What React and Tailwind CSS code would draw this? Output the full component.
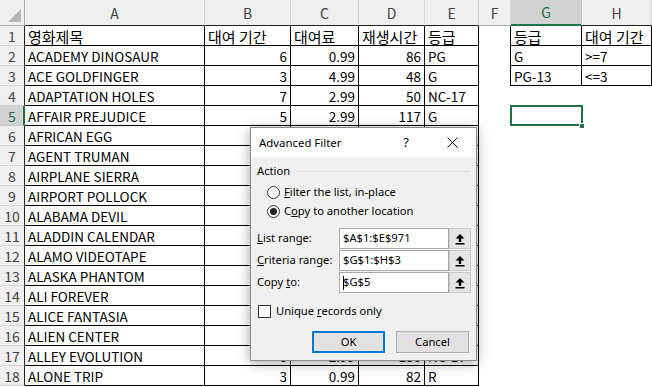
const ROWS = [
  ["영화제목", "대여 기간", "대여료", "재생시간", "등급"],
  ["ACADEMY DINOSAUR", "6", "0.99", "86", "PG"],
  ["ACE GOLDFINGER", "3", "4.99", "48", "G"],
  ["ADAPTATION HOLES", "7", "2.99", "50", "NC-17"],
  ["AFFAIR PREJUDICE", "5", "2.99", "117", "G"],
  ["AFRICAN EGG", "6", "2.99", "130", "G"],
  ["AGENT TRUMAN", "3", "2.99", "169", "PG"],
  ["AIRPLANE SIERRA", "6", "4.99", "62", "PG-13"],
  ["AIRPORT POLLOCK", "6", "4.99", "54", "R"],
  ["ALABAMA DEVIL", "3", "2.99", "114", "PG-13"],
  ["ALADDIN CALENDAR", "6", "4.99", "63", "NC-17"],
  ["ALAMO VIDEOTAPE", "6", "0.99", "126", "G"],
  ["ALASKA PHANTOM", "6", "0.99", "136", "PG"],
  ["ALI FOREVER", "4", "4.99", "150", "PG"],
  ["ALICE FANTASIA", "6", "0.99", "94", "NC-17"],
  ["ALIEN CENTER", "5", "2.99", "46", "NC-17"],
  ["ALLEY EVOLUTION", "6", "2.99", "180", "NC-17"],
  ["ALONE TRIP", "3", "0.99", "82", "R"],
];

const CRITERIA = [
  ["등급", "대여 기간"],
  ["G", ">=7"],
  ["PG-13", "<=3"],
];

const LETTERS = ["A", "B", "C", "D", "E", "F", "G", "H"];

const isKorean = (s) => /[가-힣]/.test(s);

function UpIcon() {
  return (
    <svg width="10" height="12" viewBox="0 0 10 12">
      <path d="M5 1 L9.5 5.5 L6.2 5.5 L6.2 9 L3.8 9 L3.8 5.5 L0.5 5.5 Z" fill="#000" />
      <rect x="0.5" y="10" width="9" height="1.5" fill="#000" />
    </svg>
  );
}

function RefField({ label, value, caret }) {
  return (
    <div className="flex items-center h-[21px]">
      <div className="w-[82px]">{label}</div>
      <div className="flex h-[21px]">
        <div className="w-[110px] bg-white border border-[#a9a9a9] flex items-center pl-[3px]">
          {caret && <span className="w-px h-[14px] bg-black -mr-px" />}
          {value}
        </div>
        <div className="w-[22px] bg-[#e5e5e5] border border-[#c9c9c9] flex items-center justify-center">
          <UpIcon />
        </div>
      </div>
    </div>
  );
}

function Dialog() {
  return (
    <div className="absolute left-[250px] top-[127px] w-[227px] h-[234px] bg-[#f0f0f0] border border-[#8a8a8a] shadow-[0_2px_12px_rgba(0,0,0,0.35)] font-['Segoe_UI','Noto_Sans',sans-serif] text-[11.2px] text-black flex flex-col">
      <div className="h-[29px] bg-white flex items-center pl-[8px] shrink-0">
        <span className="flex-1 text-[11.4px]">Advanced Filter</span>
        <span className="w-[10px] text-center mr-[36px] text-[13px]">?</span>
        <svg width="11" height="11" viewBox="0 0 11 11" className="mr-[18px]">
          <path d="M0.5 0.5 L10.5 10.5 M10.5 0.5 L0.5 10.5" stroke="#000" strokeWidth="1" />
        </svg>
      </div>
      <div className="flex flex-col pl-[6px] pr-[5px]">
        <div className="mt-[6px] h-[16px] flex items-center">
          <span>Action</span>
          <div className="flex-1 h-px bg-[#dcdcdc] ml-[6px] mr-[1px]" />
        </div>
        <div className="mt-[4px] h-[19px] flex items-center pl-[10px]">
          <span className="w-[13px] h-[13px] rounded-full border border-[#333] bg-white" />
          <span className="ml-[4px]">
            <span className="underline">F</span>ilter the list, in-place
          </span>
        </div>
        <div className="h-[19px] flex items-center pl-[10px]">
          <span className="w-[13px] h-[13px] rounded-full border border-[#333] bg-white flex items-center justify-center">
            <span className="w-[7px] h-[7px] rounded-full bg-[#222]" />
          </span>
          <span className="ml-[4px]">
            C<span className="underline">o</span>py to another location
          </span>
        </div>
        <div className="mt-[7px] flex flex-col gap-[1px]">
          <RefField label={<><span className="underline">L</span>ist range:</>} value="$A$1:$E$971" />
          <RefField label={<><span className="underline">C</span>riteria range:</>} value="$G$1:$H$3" />
          <RefField label={<>Copy <span className="underline">t</span>o:</>} value="$G$5" caret />
        </div>
        <div className="mt-[10px] h-[16px] flex items-center pl-[1px]">
          <span className="w-[13px] h-[13px] border border-[#333] bg-white" />
          <span className="ml-[5px]">
            Unique <span className="underline">r</span>ecords only
          </span>
        </div>
        <div className="mt-[12px] flex justify-end gap-[11px] pr-[2px]">
          <div className="w-[73px] h-[22px] bg-[#e1e1e1] border-2 border-[#0078d7] flex items-center justify-center">
            OK
          </div>
          <div className="w-[73px] h-[22px] bg-[#e1e1e1] border border-[#adadad] flex items-center justify-center">
            Cancel
          </div>
        </div>
      </div>
    </div>
  );
}

function ColHeader({ letter }) {
  if (letter === "G") {
    return (
      <div className="bg-[#d2d2d2] border-r border-[#c6c6c6] border-b-2 border-b-[#217346] text-[#217346] flex items-center justify-center">
        {letter}
      </div>
    );
  }
  if (letter === "F") {
    return (
      <div className="bg-[#efefef] border-r border-[#d4d4d4] border-b border-b-[#ababab] text-[#444] flex items-center justify-center">
        {letter}
      </div>
    );
  }
  return (
    <div className="bg-[#efefef] border-r border-[#d4d4d4] border-b border-b-[#222] text-[#444] flex items-center justify-center">
      {letter}
    </div>
  );
}

function RowHeader({ n }) {
  if (n === 5) {
    return (
      <div className="bg-[#d2d2d2] border-r-2 border-r-[#217346] border-b border-b-[#c6c6c6] text-[#217346] flex items-center justify-center pl-[1px] pt-[1px]">
        {n}
      </div>
    );
  }
  return (
    <div className="bg-[#efefef] border-r border-r-[#222] border-b border-b-[#d4d4d4] text-[#444] flex items-center justify-center pt-[1px]">
      {n}
    </div>
  );
}

function DataCell({ value, right }) {
  const size = isKorean(value) ? "text-[15px]" : "text-[13.5px]";
  return (
    <div
      className={
        (right
          ? "border-r border-b border-black flex items-center justify-end pr-[3px] pt-[2px] whitespace-nowrap overflow-hidden "
          : "border-r border-b border-black flex items-center pl-[3px] pt-[2px] whitespace-nowrap overflow-hidden ") + size
      }
    >
      {value}
    </div>
  );
}

export default function App() {
  return (
    <div className="w-[652px] h-[387px] bg-white overflow-hidden relative">
      <div className="grid grid-cols-[25px_180px_86px_68px_66px_54px_32px_71px_70px] grid-rows-[26px_repeat(18,20px)] font-['Malgun_Gothic','Noto_Sans_CJK_KR',sans-serif] text-[14px] text-black leading-none">
        <div className="bg-[#efefef] border-r border-b border-[#ababab] flex items-end justify-end p-[3px]">
          <svg width="13" height="13" viewBox="0 0 13 13">
            <path d="M13 0 L13 13 L0 13 Z" fill="#b5b5b5" />
          </svg>
        </div>
        {LETTERS.map((l) => (
          <ColHeader key={l} letter={l} />
        ))}
        {ROWS.map((row, i) => {
          const n = i + 1;
          const crit = CRITERIA[i];
          const header = i === 0;
          return [
            <RowHeader key={"h" + n} n={n} />,
            <DataCell key={"a" + n} value={row[0]} />,
            <DataCell key={"b" + n} value={row[1]} right={!header} />,
            <DataCell key={"c" + n} value={row[2]} right={!header} />,
            <DataCell key={"d" + n} value={row[3]} right={!header} />,
            <DataCell key={"e" + n} value={row[4]} />,
            <div key={"f" + n} className={crit ? "border-r border-black" : ""} />,
            crit ? (
              <DataCell key={"g" + n} value={crit[0]} />
            ) : n === 5 ? (
              <div key={"g" + n} className="relative">
                <div className="absolute -left-[1px] -top-[1px] w-[73px] h-[21px] border-2 border-[#217346]" />
                <div className="absolute -right-[3px] -bottom-[3px] w-[6px] h-[6px] bg-[#217346] border border-white" />
              </div>
            ) : (
              <div key={"g" + n} />
            ),
            crit ? <DataCell key={"i" + n} value={crit[1]} /> : <div key={"i" + n} />,
          ];
        })}
      </div>
      <Dialog />
    </div>
  );
}
